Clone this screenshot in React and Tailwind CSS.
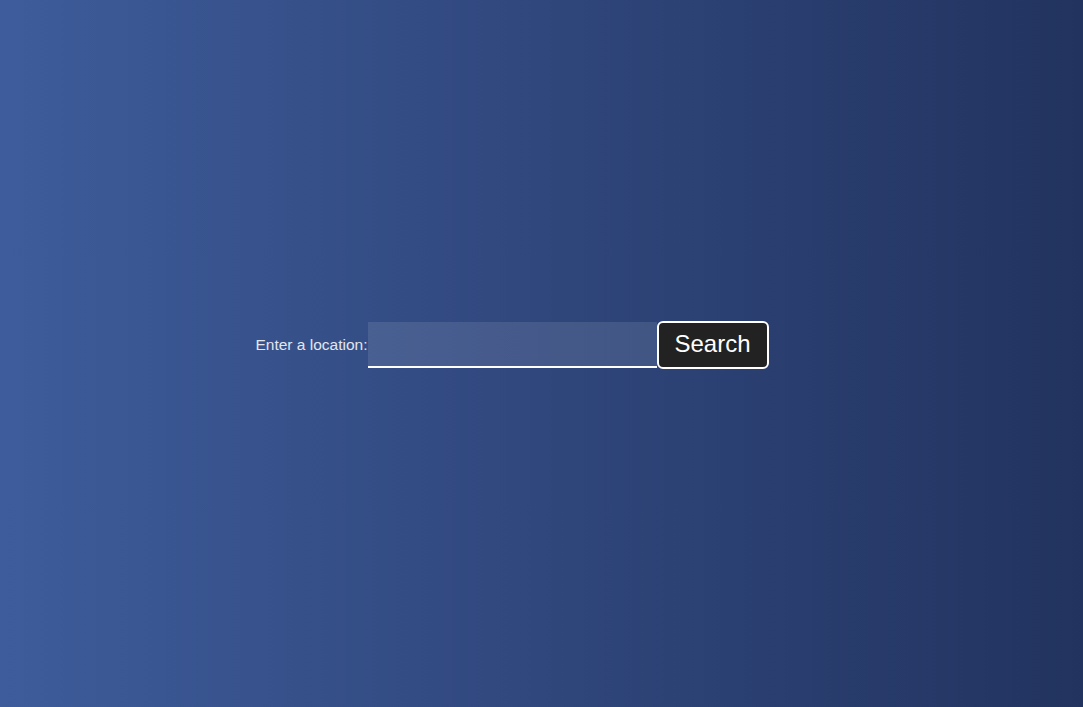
export default function App() {
  return (
    <div className="min-h-screen w-full bg-gradient-to-r from-[#3e5c9b] to-[#22335f] flex items-center justify-center pr-[59px] pb-[17px] font-['Liberation_Sans',Arial,sans-serif]">
      <form className="flex items-center" onSubmit={(e) => e.preventDefault()}>
        <label htmlFor="loc" className="text-[15.5px] text-[#e2e6ef]">
          Enter a location:
        </label>
        <input
          id="loc"
          type="text"
          className="w-[289px] h-[46px] bg-white/10 border-0 border-b-2 border-white outline-none text-white px-2"
        />
        <button
          type="submit"
          className="h-[48px] w-[112px] bg-[#222222] text-white text-[24px] leading-none pb-[3px] border-2 border-white rounded-[6px]"
        >
          Search
        </button>
      </form>
    </div>
  );
}
